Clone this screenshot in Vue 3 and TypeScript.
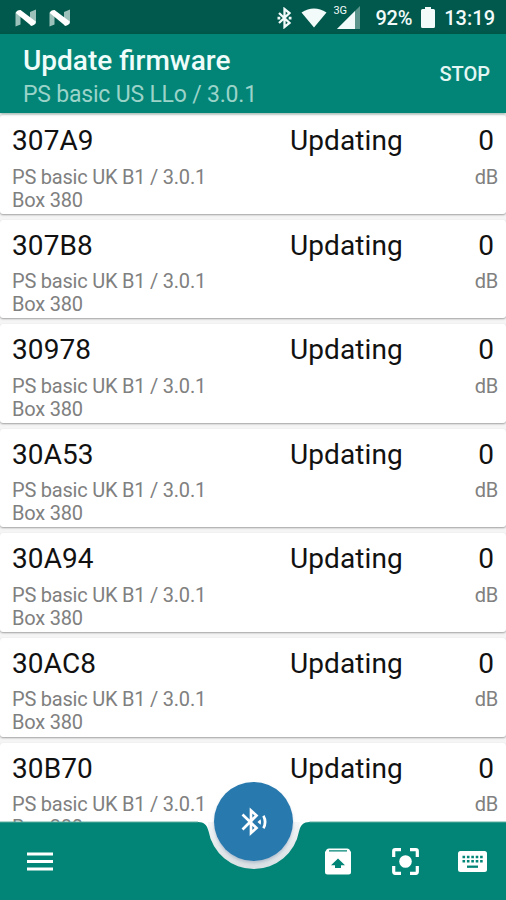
<script setup lang="ts">
interface Device {
  id: string
  state: string
  level: number
}

const devices: Device[] = ['307A9', '307B8', '30978', '30A53', '30A94', '30AC8', '30B70'].map(
  (id) => ({ id, state: 'Updating', level: 0 }),
)
</script>

<template>
  <div class="screen">
    <div class="status">
      <svg v-for="n in 2" :key="n" class="nougat" viewBox="0 0 22 18">
        <path d="M.5 3.500l5-2v14L.5 17.500zM15 3l6-2.500v14l-6 2z" fill="#9cc1ba" />
        <path d="M.8 4Q1.500 1 5.500 1L20.800 12.500Q20.500 16 16.500 17z" fill="#fff" />
      </svg>
      <span class="grow"></span>
      <svg class="bt" viewBox="0 0 15 22">
        <path d="M2 6l10.500 10L7.500 20V2l5 4L2 16" fill="none" stroke="#f2fbf9" stroke-width="2.300" />
        <path d="M.5 9.700h2.800v2.800H.5zM11.700 9.700h2.800v2.800h-2.800z" fill="#f2fbf9" />
      </svg>
      <svg class="wifi" viewBox="0 0 26 20">
        <path d="M.5 4.500Q13-3.500 25.500 4.500L13 19.500z" fill="#f2fbf9" />
      </svg>
      <div class="signal">
        <svg viewBox="0 0 23 23">
          <path d="M23 0v23H0z" fill="#5b958c" />
          <path d="M18 5v18H0z" fill="#f2fbf9" />
        </svg>
        <span class="net">3G</span>
      </div>
      <span class="pct">92%</span>
      <svg class="battery" viewBox="0 0 14 21">
        <path d="M4 0h6v2h2.500q1.500 0 1.500 1.500v16q0 1.500-1.500 1.500h-11Q0 21 0 19.500v-16Q0 2 1.500 2H4z" fill="#f2fbf9" />
      </svg>
      <span class="clock">13:19</span>
    </div>

    <header class="header">
      <div>
        <h1 class="title">Update firmware</h1>
        <p class="subtitle">PS basic US LLo / 3.0.1</p>
      </div>
      <button class="stop">STOP</button>
    </header>

    <main class="list">
      <article v-for="d in devices" :key="d.id" class="card">
        <div class="main-row">
          <span class="id">{{ d.id }}</span>
          <span class="state">{{ d.state }}</span>
          <span class="level">{{ d.level }}</span>
        </div>
        <div class="sub-row">
          <span>PS basic UK B1 / 3.0.1</span>
          <span class="unit">dB</span>
        </div>
        <div class="sub-row box">Box 380</div>
      </article>
    </main>

    <nav class="bar">
      <svg class="bar-shape" viewBox="0 0 506 120">
        <defs>
          <linearGradient id="halo" gradientUnits="userSpaceOnUse" x1="0" y1="42" x2="0" y2="90">
            <stop offset="0" stop-color="#f4f6f7" />
            <stop offset="0.500" stop-color="#e4e9ec" />
            <stop offset="1" stop-color="#d9dfe2" />
          </linearGradient>
          <clipPath id="dip"><path d="M200 42H308V92H200z" /></clipPath>
        </defs>
        <circle cx="253.800" cy="43" r="46" fill="url(#halo)" clip-path="url(#dip)" />
        <path
          d="M0 42H198C204 42 207 45 208.500 51A46 46 0 0 0 299.100 51C300.600 45 303.500 42 309.500 42H506V120H0z"
          fill="#028577"
        />
        <path d="M0 42H198M309.500 42H506" stroke="#5fae9f" stroke-width="1" fill="none" />
      </svg>
      <button class="fab">
        <svg viewBox="0 0 28 30">
          <path d="M2.500 7.500L16.500 21 11 26V3.500L16.500 8.500 2.500 22.500" fill="none" stroke="#fff" stroke-width="2.700" />
          <path d="M17.500 15l3-2.800q1 2.800 0 5.600zM22.300 9.500l2.200-1.500q4 7 0 14l-2.200-1.500q2.800-5.500 0-11z" fill="#fff" />
        </svg>
      </button>
      <div class="actions">
        <svg class="menu" viewBox="0 0 26 19">
          <path d="M0 2h26M0 9.500h26M0 17h26" stroke="#fff" stroke-width="3.200" />
        </svg>
        <span class="grow"></span>
        <svg class="upload" viewBox="0 0 26 27">
          <path d="M4 .5h18q1.500 0 2.300 1L26 4v20q0 2.500-2.500 2.500h-21Q0 26.500 0 24V4l1.700-2.500q.8-1 2.300-1z" fill="#fff" />
          <path d="M4 2.300h18v1.300H4zM13 10.500l7 6.700h-4v2.800h-6v-2.800H6z" fill="#028577" />
        </svg>
        <svg class="focus" viewBox="0 0 27 27">
          <path
            d="M1.700 9V3.200q0-1.500 1.500-1.500H9M18 1.700h5.800q1.500 0 1.500 1.500V9M25.300 18v5.800q0 1.500-1.500 1.500H18M9 25.300H3.200q-1.500 0-1.500-1.500V18"
            fill="none" stroke="#fff" stroke-width="3.200"
          />
          <circle cx="13.500" cy="13.500" r="6.300" fill="#fff" />
        </svg>
        <svg class="keyboard" viewBox="0 0 29 21">
          <rect width="29" height="21" rx="2.500" fill="#fff" />
          <path d="M4.500 6h20.200M4.500 10.300h20.200" stroke="#028577" stroke-width="2.500" stroke-dasharray="2.600 1.800" />
          <path d="M9 15.700h11" stroke="#028577" stroke-width="2.300" />
        </svg>
      </div>
    </nav>
  </div>
</template>

<style>
body {
  margin: 0;
}
</style>

<style scoped>
.screen {
  position: relative;
  width: 506px;
  height: 900px;
  overflow: hidden;
  display: flex;
  flex-direction: column;
  background: #f5f5f5;
  font-family: Roboto, "Liberation Sans", sans-serif;
}
.grow {
  flex: 1;
}
button {
  border: 0;
  padding: 0;
  font-family: inherit;
}
.status {
  flex: none;
  box-sizing: border-box;
  height: 34px;
  padding: 1px 11px 0 15px;
  display: flex;
  align-items: center;
  background: #01584c;
  color: #f2fbf9;
  font-size: 20px;
  font-weight: 500;
}
.nougat {
  width: 22px;
  height: 18px;
  margin-right: 12px;
}
.bt {
  width: 15px;
  height: 22px;
}
.wifi {
  width: 26px;
  height: 20px;
  margin-left: 9px;
}
.signal {
  position: relative;
  width: 23px;
  height: 23px;
  margin-left: 10px;
}
.signal svg {
  display: block;
  width: 23px;
  height: 23px;
}
.net {
  position: absolute;
  left: -4px;
  top: -1px;
  font-size: 11px;
  line-height: 11px;
  font-weight: 400;
}
.pct {
  margin-left: 15px;
  letter-spacing: -0.200px;
}
.battery {
  width: 14px;
  height: 21px;
  margin-left: 9px;
}
.clock {
  margin-left: 9px;
}
.header {
  position: relative;
  z-index: 1;
  flex: none;
  box-sizing: border-box;
  height: 79px;
  padding: 11px 16px 0 23px;
  display: flex;
  justify-content: space-between;
  background: #028577;
  box-shadow: 0 1px 3px rgba(0, 60, 40, 0.4);
}
.title {
  margin: 0;
  font-size: 28px;
  line-height: 32px;
  font-weight: 500;
  color: #effcf9;
}
.subtitle {
  margin: 4px 0 0;
  font-size: 23px;
  line-height: 27px;
  letter-spacing: -0.200px;
  color: #9bd3c9;
}
.stop {
  align-self: flex-start;
  margin-top: 17px;
  background: none;
  color: #e4f6f3;
  font-size: 20px;
  line-height: 24px;
  font-weight: 500;
}
.list {
  flex: 1;
  min-height: 0;
  overflow: hidden;
  padding-top: 2px;
  display: flex;
  flex-direction: column;
  gap: 6px;
}
.card {
  flex: none;
  box-sizing: border-box;
  height: 98.600px;
  padding: 10px 8px 0 12px;
  background: #fff;
  border-radius: 3px;
  box-shadow: 0 1px 2px rgba(0, 0, 0, 0.35);
}
.main-row {
  display: grid;
  grid-template-columns: 278px 1fr auto;
  font-size: 28px;
  line-height: 32px;
  letter-spacing: 0.100px;
  color: #111;
}
.level {
  padding-right: 4px;
}
.sub-row {
  display: flex;
  justify-content: space-between;
  margin-top: 8.500px;
  font-size: 20px;
  line-height: 23px;
  letter-spacing: -0.220px;
  color: #808080;
}
.box {
  margin-top: 0;
}
.bar {
  position: absolute;
  z-index: 2;
  left: 0;
  right: 0;
  bottom: 0;
  height: 120px;
}
.bar-shape {
  position: absolute;
  inset: 0;
  width: 506px;
  height: 120px;
}
.fab {
  position: absolute;
  left: 214px;
  top: 2px;
  width: 79px;
  height: 79px;
  border-radius: 50%;
  display: flex;
  align-items: center;
  justify-content: center;
  background: #2879ae;
  box-shadow: 0 2px 3px rgba(40, 80, 130, 0.25);
}
.fab svg {
  width: 28px;
  height: 30px;
}
.actions {
  position: relative;
  box-sizing: border-box;
  height: 120px;
  padding: 42px 19px 0 27px;
  display: flex;
  align-items: center;
  pointer-events: none;
}
.menu {
  width: 26px;
  height: 19px;
}
.upload {
  width: 26px;
  height: 27px;
}
.focus {
  width: 27px;
  height: 27px;
  margin-left: 41px;
}
.keyboard {
  width: 29px;
  height: 21px;
  margin-left: 39px;
}
</style>
